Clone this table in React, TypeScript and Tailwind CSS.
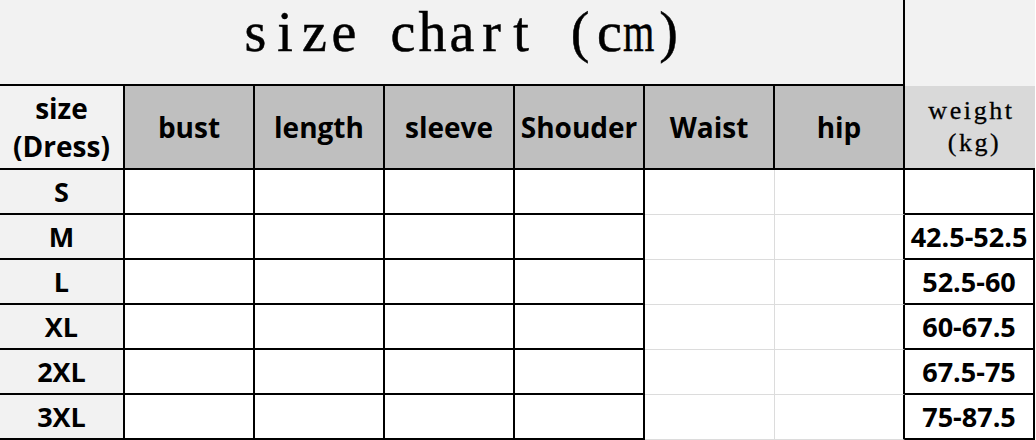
import React from "react";

const sans = { fontFamily: '"Open Sans", "Noto Sans", sans-serif' };

const cols = ["bust", "length", "sleeve", "Shouder", "Waist", "hip"];
const rows: [string, string][] = [
  ["S", ""],
  ["M", "42.5-52.5"],
  ["L", "52.5-60"],
  ["XL", "60-67.5"],
  ["2XL", "67.5-75"],
  ["3XL", "75-87.5"],
];

const title = "size chart (cm)".split("");

export default function App() {
  return (
    <div
      className="w-[1036px] h-[440px] bg-white text-black overflow-hidden"
      style={sans}
    >
      {/* title row */}
      <div className="flex">
        <div className="w-[905px] h-[86px] bg-[#f2f2f2] border-r-2 border-b-2 border-black flex justify-center pl-[21px] pt-[4px]">
          <div
            className="flex text-[56px] leading-none [-webkit-text-stroke:0.5px_black]"
            style={{ fontFamily: '"Liberation Serif", serif' }}
          >
            {title.map((c, i) => (
              <span key={i} className="w-[29.5px] flex justify-center whitespace-pre">
                <span className={c === "m" ? "inline-block scale-x-[0.72]" : "inline-block"}>
                  {c}
                </span>
              </span>
            ))}
          </div>
        </div>
        <div className="w-[130px] h-[86px] bg-[#f2f2f2]" />
      </div>

      <div className="grid grid-cols-[125px_repeat(7,130px)] w-[1035px]">
        {/* header */}
        <div className="h-[84px] bg-[#f2f2f2] border-r-2 border-b-2 border-black flex flex-col items-center justify-center text-[28px] font-bold leading-[38px]">
          <span>size</span>
          <span>(Dress)</span>
        </div>
        {cols.map((c) => (
          <div
            key={c}
            className="h-[84px] bg-[#bfbfbf] border-r-2 border-b-2 border-black flex items-center justify-center text-[28px] font-bold leading-[38px] whitespace-nowrap"
          >
            {c}
          </div>
        ))}
        <div
          className="h-[84px] bg-[#d9d9d9] border-b-2 border-black flex flex-col items-center justify-start pt-[9px] pl-[3px] text-[26px] leading-[32px] tracking-[2.6px] [-webkit-text-stroke:0.3px_black]"
          style={{ fontFamily: '"Liberation Serif", serif' }}
        >
          <span>weight</span>
          <span className="pl-[6px]">(kg)</span>
        </div>

        {/* data rows */}
        {rows.map(([size, weight]) => (
          <React.Fragment key={size}>
            <div className="h-[45px] bg-[#f2f2f2] border-r-2 border-b-2 border-black flex items-center justify-center text-[27px] font-bold leading-[38px]">
              {size}
            </div>
            <div className="h-[45px] border-r-2 border-b-2 border-black" />
            <div className="h-[45px] border-r-2 border-b-2 border-black" />
            <div className="h-[45px] border-r-2 border-b-2 border-black" />
            <div className="h-[45px] border-r-2 border-b-2 border-black" />
            <div className="h-[45px] border-r border-b border-[#dcdcdc]" />
            <div className="h-[45px] border-r-2 border-r-black border-b border-b-[#dcdcdc]" />
            <div className="h-[45px] border-r-2 border-b-2 border-black flex items-center justify-center text-[27px] font-bold leading-[38px] whitespace-nowrap">
              {weight}
            </div>
          </React.Fragment>
        ))}
      </div>
    </div>
  );
}
